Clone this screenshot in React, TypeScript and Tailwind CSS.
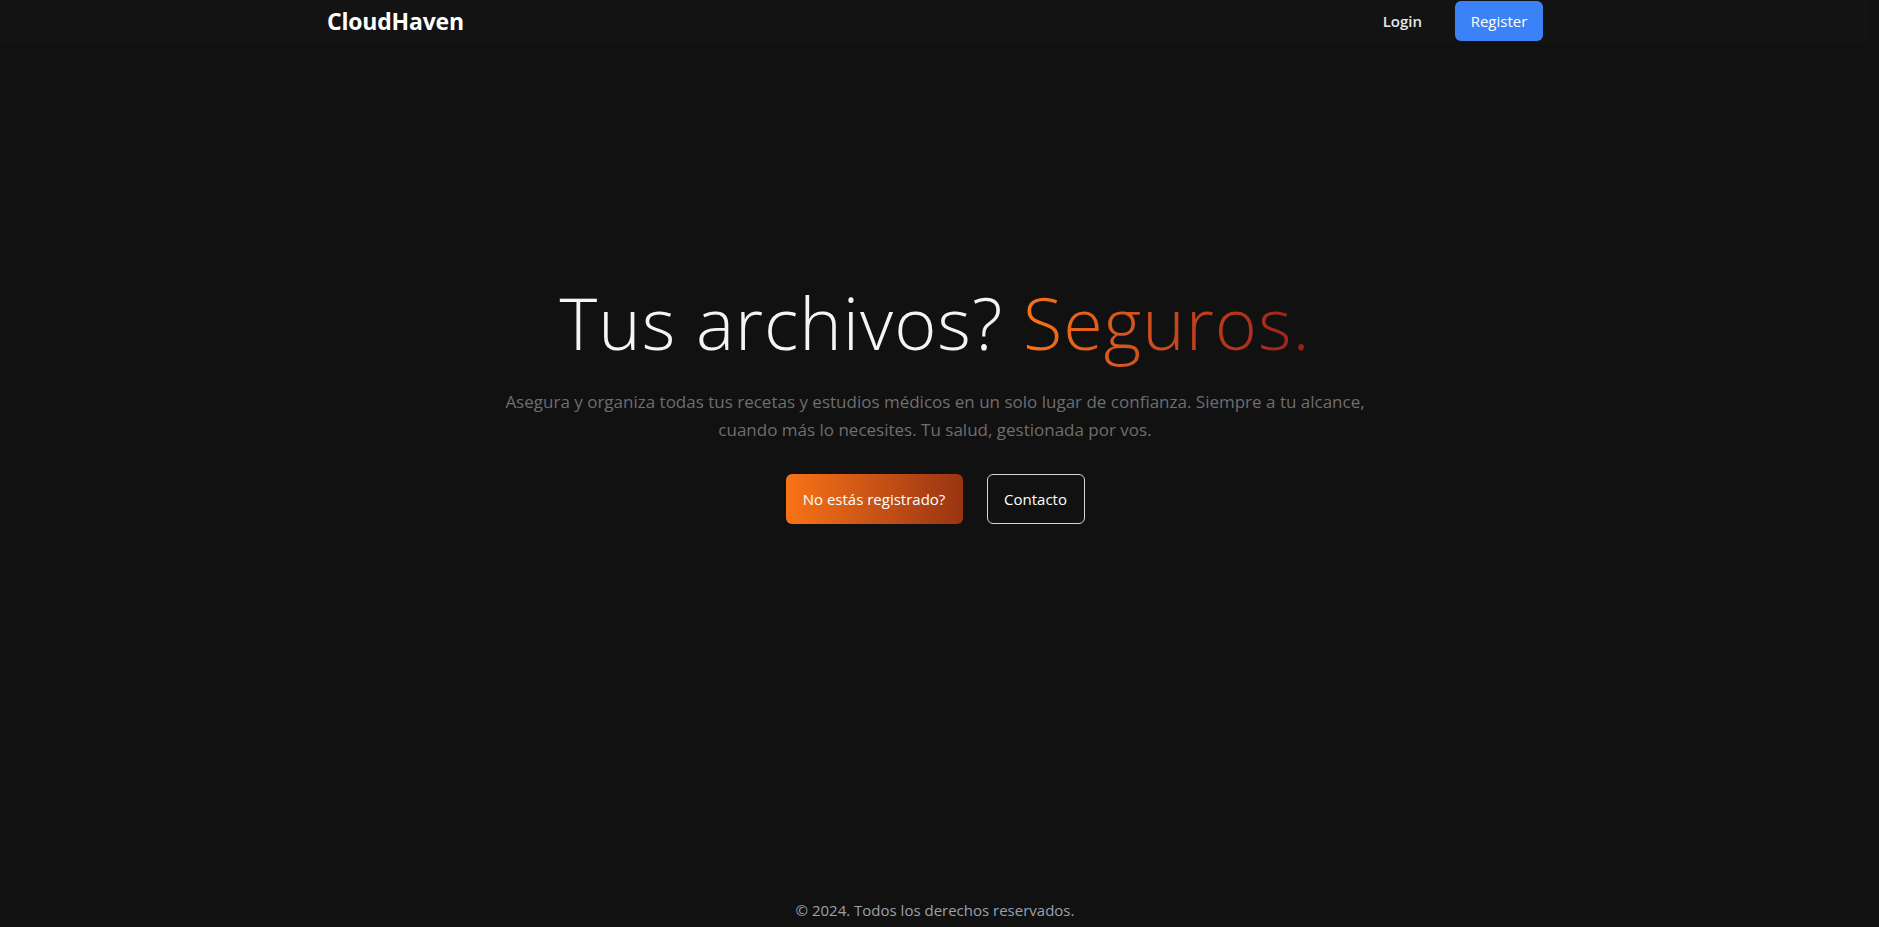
import React from "react";

export default function App() {
  const font = { fontFamily: '"Open Sans", "Noto Sans", sans-serif' };
  return (
    <div className="min-h-screen bg-[#111111]">
      <div className="min-h-screen w-[calc(100%-9px)] text-white flex flex-col" style={font}>
        <header className="bg-[#131313] h-[42px]">
          <div className="mx-auto w-[1216px] h-full flex items-center justify-between">
            <span className="text-[23px] font-bold tracking-[-0.2px]">CloudHaven</span>
            <div className="flex items-center gap-[33px]">
              <button className="text-[15px] font-semibold text-gray-200">Login</button>
              <button className="bg-[#3b82f6] text-white text-[15px] rounded-md h-10 w-[88px]">Register</button>
            </div>
          </div>
        </header>
        <main className="flex-1 flex flex-col items-center pt-[244px]">
          <h1 className="text-[72px] leading-none font-light text-gray-100 tracking-[1px]">
            Tus archivos?{" "}
            <span className="bg-gradient-to-r from-[#f97316] to-[#991b1b] bg-clip-text text-transparent">Seguros.</span>
          </h1>
          <p className="mt-[30px] max-w-[880px] text-center text-[17px] leading-[28px] text-[#6e6e6e]">
            Asegura y organiza todas tus recetas y estudios médicos en un solo lugar de confianza. Siempre a tu alcance, cuando más lo necesites. Tu salud, gestionada por vos.
          </p>
          <div className="mt-[30px] flex gap-6">
            <button className="h-[50px] w-[177px] rounded-md bg-gradient-to-r from-[#f97316] to-[#9a3412] text-[15px] text-white">No estás registrado?</button>
            <button className="h-[50px] w-[98px] rounded-md border border-gray-300 text-[15px] text-white">Contacto</button>
          </div>
        </main>
        <footer className="h-[34px] pt-[6px] flex items-start justify-center text-[15px] text-gray-400">
          © 2024. Todos los derechos reservados.
        </footer>
      </div>
    </div>
  );
}
